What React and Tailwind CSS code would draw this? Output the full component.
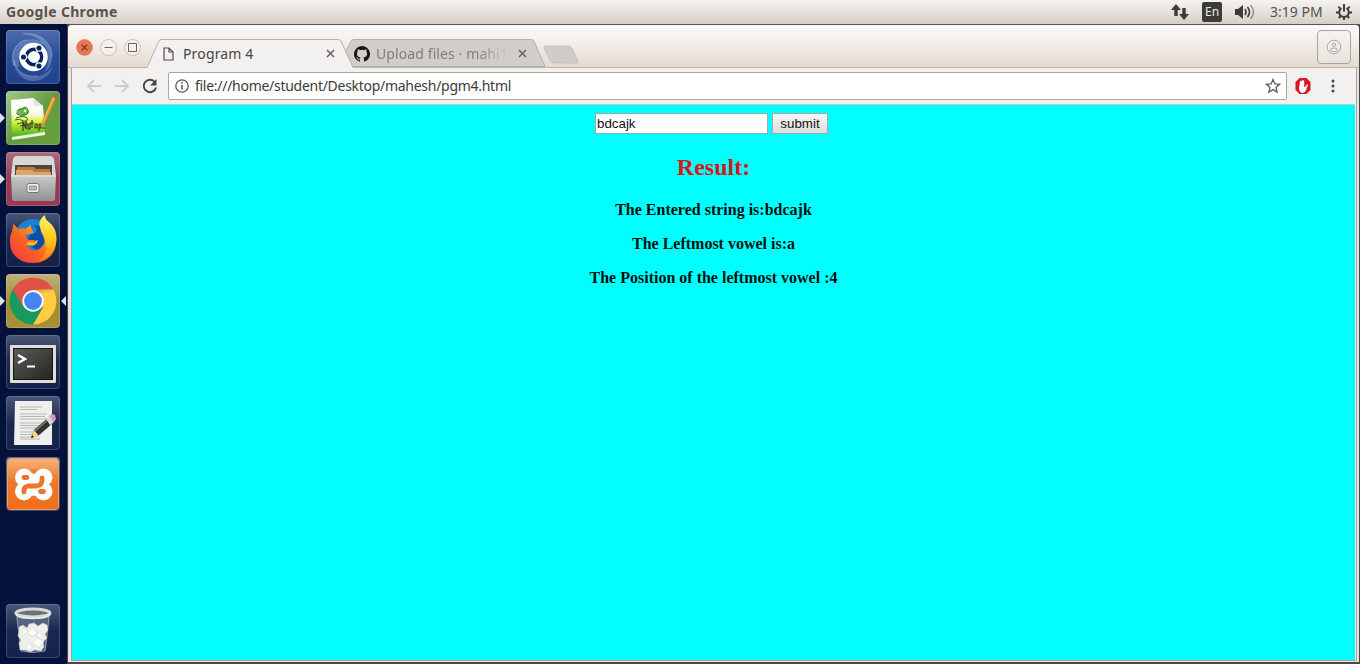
import React from "react";

const ui = "font-['Noto_Sans','Open_Sans',sans-serif]";

function Tile({ bg, label, left, right, children }) {
  return (
    <div className="relative h-[54px] w-[54px]" title={label}>
      {left && (
        <svg className="absolute -left-[6px] top-[21px] h-3 w-[5px]" viewBox="0 0 5 12">
          <path d="M0 1 5 6 0 11Z" fill="#dfe0ea" />
        </svg>
      )}
      {right && (
        <svg className="absolute -right-[6px] top-[22px] h-[10px] w-[5px]" viewBox="0 0 5 10">
          <path d="M5 0 0 5 5 10Z" fill="#dfe0ea" />
        </svg>
      )}
      <div className={"h-[54px] w-[54px] overflow-hidden rounded-[4px] shadow-[inset_0_0_0_1px_rgba(255,255,255,0.16)] " + bg}>
        <svg className="h-[54px] w-[54px]" viewBox="0 0 54 54">{children}</svg>
      </div>
    </div>
  );
}

const glass = "bg-linear-to-b from-[#4a5676] via-[#1a2850] to-[#15234c]";

function Launcher() {
  return (
    <div className="flex w-[67px] shrink-0 flex-col gap-[7px] bg-[#03113b] pl-[6px] pt-[6px]">
      <Tile bg="bg-linear-to-b from-[#4f6dae] via-[#294d99] to-[#23418c]" label="Search">
        <g fill="#9db3dd">
          <path d="M17 4C33 2 46 12 46 27c0 8-4 13-8 16 5-8 6-17 2-25C36 9 27 5 17 4Z" opacity=".4" />
          <path d="M8 36C4 24 9 13 20 10c8-2 16 0 21 6-9-4-18-3-24 3-5 5-5 12-3 18Z" opacity=".35" />
          <path d="M8 30c2 12 12 18 24 16 8-1 13-6 15-12-1 9-8 16-18 17C18 52 8 43 8 30Z" opacity=".35" />
        </g>
        <path d="M17 4C33 2 46 12 46 27M8 36C4 24 9 13 20 10M8 30c2 12 12 18 24 16" fill="none" stroke="#b9c9e8" strokeWidth=".8" opacity=".6" />
        <circle cx="27.500" cy="27" r="14.300" fill="#fff" />
        <circle cx="28" cy="27" r="7.600" fill="none" stroke="#0b2360" strokeWidth="3.600" />
        <path d="M28 27 33.500 17.500M28 27l5.500 9.500M28 27H17" stroke="#fff" strokeWidth="1.200" />
        <circle cx="28" cy="27" r="5.800" fill="#fff" />
        <g fill="#0b2360" stroke="#fff" strokeWidth="1.100">
          <circle cx="17.500" cy="27" r="3.100" /><circle cx="33" cy="18" r="3.100" /><circle cx="33" cy="36" r="3.100" />
        </g>
      </Tile>
      <Tile bg="bg-linear-to-br from-[#a5c98c] via-[#659b42] to-[#66a03d]" label="Notepadqq" left>
        <defs><linearGradient id="note" x2="0" y2="1"><stop stopColor="#fff" /><stop offset=".4" stopColor="#f7fbed" /><stop offset=".6" stopColor="#d9ef36" /><stop offset="1" stopColor="#39a91e" /></linearGradient></defs>
        <path d="m5 9 22-2 10 8 2 27-33 5Z" fill="url(#note)" />
        <path d="m27 7 1 8 9 0Z" fill="#dce6d9" />
        <path d="m6 46 33-5v3L6 49Z" fill="#eef5e7" />
        <path d="M12 22q0-5 4-4 3-4 5 1 3 2 0 4-4 3-9-1Z" fill="#64c339" />
        <g fill="none" stroke="#264b1e" strokeWidth=".9">
          <path d="M11 23q0-6 5-5 4-4 6 1 1 4-3 5-5 1-8-1Zm-1 4q8-3 11 0 2 4-5 3M9 29q5-2 8 1M11 33q6-3 11 0M14 35l7-1" />
        </g>
        <g fill="none" stroke="#2b3b1e" strokeWidth="1.200">
          <path d="M17 40v-9l3 7v-8M22 33v5h2v-5h-2m4-4v8m-2-5h4M29 33v4h2v-4h-2m4 0v7m0-7h2v4h-2m3-3h2m-2 3h3" />
        </g>
        <circle cx="19" cy="20" r="1.200" fill="#e9ffd2" />
        <path d="m36 30 11-25 3 2-11 25-4 4Z" fill="#e79925" /><path d="m46 6 2-3 3 2-1 3Z" fill="#b1664e" />
        <path d="m37 31 11-25" stroke="#f9cd66" strokeWidth="1" />
      </Tile>
      <Tile bg="bg-linear-to-b from-[#aa6e80] via-[#933b55] to-[#983a55]" label="Files" left>
        <defs><linearGradient id="cab" x2="0" y2="1"><stop stopColor="#cbcbc8" /><stop offset="1" stopColor="#929292" /></linearGradient></defs>
        <path d="M7 7q1-3 4-3h33q3 0 4 3l2 17H5Z" fill="#d7d7d4" />
        <path d="M9 13h37v11H9Z" fill="#50433b" />
        <path d="M11 15h17l2 2h14v8H11Z" fill="#b87947" /><path d="M10 18h16l2 2h17v5H10Z" fill="#dba76e" />
        <path d="M5 23h45l-1 24q0 2-3 2H8q-2 0-2-2Z" fill="url(#cab)" /><path d="M5 24h45" stroke="#ededeb" />
        <rect x="21" y="31.500" width="12" height="9" rx="2" fill="#f2f2f0" stroke="#777" /><rect x="23.500" y="34" width="7" height="4" fill="#bcbcba" stroke="#777" strokeWidth=".7" />
      </Tile>
      <Tile bg={glass} label="Firefox">
        <defs>
          <linearGradient id="foxa" x1="0" y1="1" x2="1" y2="0"><stop stopColor="#f8314f" /><stop offset=".45" stopColor="#f8641f" /><stop offset="1" stopColor="#ffdb22" /></linearGradient>
          <linearGradient id="foxb" x2="0" y2="1"><stop stopColor="#fff36b" /><stop offset=".5" stopColor="#ffc91a" /><stop offset="1" stopColor="#fa7a13" /></linearGradient>
        </defs>
        <circle cx="27" cy="24" r="18" fill="#1b82d6" /><path d="M24 12c5 0 8 3 6 7l-6 3-4 8 12 8 10-13-5-12Z" fill="#0b4da9" />
        <path d="M7 11c2 1 4 3 5 5 3-1 5-1 7 0l6-4c0 4 1 5 3 8l-8 2c0 3 1 4 3 5l6 0c-2 4-6 4-8 6 4 6 12 5 16 0 3-6 3-12 1-18 11 0 13 7 12 15-1 12-10 20-23 20C13 50 3 41 4 27c0-6 3-8 3-16Z" fill="url(#foxa)" />
        <path d="M34 14c-2-5 1-9 5-12-1 6 7 7 10 15 5 14-3 28-17 32 7-6 10-12 7-20-1-7-4-8-5-15Z" fill="url(#foxb)" />
        <path d="M21 32c-1-3 2-4 5-3 2 1 4-2 6-2-1 5-5 7-11 5Z" fill="#ffb030" />
      </Tile>
      <Tile bg="bg-linear-to-b from-[#bfb17c] via-[#a58d35] to-[#a98f38]" label="Google Chrome" left right>
        <path d="M6.700 15.500A23.400 23.400 0 0 1 47.300 15.500L27 16 16.500 33Z" fill="#df5245" />
        <path d="M47.300 15.500A23.400 23.400 0 0 1 27 50.500L37 33.500 27 16Z" fill="#ffcc42" />
        <path d="M6.700 15.500A23.400 23.400 0 0 0 27 50.500L37 33 17.500 33Z" fill="#169b5c" />
        <path d="M27 16h20.300l-19 5Z" fill="#000" opacity=".09" />
        <circle cx="27" cy="27" r="10.700" fill="#fff" /><circle cx="27" cy="27" r="8.900" fill="#4384f2" />
      </Tile>
      <Tile bg={glass} label="Terminal">
        <defs><linearGradient id="term" x2="1" y2="1"><stop stopColor="#5c5c58" /><stop offset="1" stopColor="#242421" /></linearGradient></defs>
        <rect x="4" y="10" width="46" height="38" rx="1" fill="#deded9" /><rect x="7.500" y="13.500" width="39" height="31" fill="url(#term)" stroke="#161616" />
        <path d="m12 20 7 4-7 4" fill="none" stroke="#fff" strokeWidth="2.400" /><path d="M21 31.500h8" stroke="#fff" strokeWidth="2" />
      </Tile>
      <Tile bg={glass} label="Text Editor">
        <path d="M9 5h37v44H8Z" fill="#efefed" />
        <path d="M14 11h22M14 13.500h17M14 18h27M14 20.500h25M14 23h27M14 27h26M14 29.500h20M14 32h18M14 36h15M14 38.500h15M14 41h13M14 43h20" stroke="#aaa" strokeWidth=".8" />
        <path d="m25 42 3-8 15-13 4 6-15 13Z" fill="#303330" /><path d="m29 35 15-13" stroke="#7c817d" strokeWidth="1.500" />
        <path d="m25 42 3-8 5 6Z" fill="#f0db78" /><path d="m25 42 1-3 2 2Z" fill="#222" />
        <path d="m40 23 3-3 5 6-4 3Z" fill="#d9d9d9" /><path d="m43 20 3-2 3 1 1 4-2 3Z" fill="#d993cb" />
      </Tile>
      <Tile bg={glass} label="XAMPP">
        <defs><linearGradient id="xampp" x2="0" y2="1"><stop stopColor="#f6b27b" /><stop offset=".45" stopColor="#ed792b" /><stop offset="1" stopColor="#f26c17" /></linearGradient></defs>
        <rect x="1.500" y="1.500" width="51" height="51" rx="3" fill="url(#xampp)" stroke="#dfa27b" />
        <g fill="#fff">
          <circle cx="18" cy="20.500" r="9" /><circle cx="37.500" cy="20.500" r="9" /><circle cx="18" cy="34.500" r="9" /><circle cx="37.500" cy="34.500" r="9" />
          <path d="M18 16h19v23H18Z" />
        </g>
        <path d="M24 12.500h7.500l-3.750 5ZM24 43h7.500l-3.750-5Z" fill="#ef7a2d" />
        <g fill="none" stroke="#ed752a" strokeWidth="4.800" strokeLinecap="round" strokeLinejoin="round">
          <path d="M18 20.500h3M18 35v-2q0-3 4-4h9q5-1 5-6v-2M34.500 34.500h3" />
        </g>
      </Tile>
      <div className="mt-[86px]">
        <Tile bg={glass} label="Trash">
          <path d="m10 10 4 36q13 5 26 0l4-36Z" fill="#8b98a8" opacity=".45" />
          <path d="m11 13 4 34q12 3 24 0l4-34" fill="none" stroke="#b4bec7" opacity=".65" />
          <g fill="#eeeeeb" stroke="#c3c7c8" strokeWidth=".5">
            <path d="m13 23 4-2 4 3 2-4 5-1 4 3 5-3 4 2 1 5-3 4 2 4-4 4 1 5-3 4-6-1-5 2-5-2-5 0-1-7 2-3-3-4 1-4Z" />
            <path d="m17 24 5 3-5 5m10-8 5 5-6 4-4-4m0 10 5 4-5 4m10-13 6 4-5 6-6-4m6-13-3 5 5 3" fill="#fafaf8" />
          </g>
          <ellipse cx="27" cy="9" rx="17" ry="4" fill="#6d7278" stroke="#d9dbda" strokeWidth="3" />
          <path d="M10 10c1 6 33 6 34 0" fill="none" stroke="#f0f0ed" strokeWidth="1.500" />
        </Tile>
      </div>
    </div>
  );
}

function TopBar() {
  return (
    <div className={"flex h-[25px] items-center border-b border-[#5a5450] bg-linear-to-b from-[#f5f3f0] to-[#d7cfc7] pl-[6px] text-[#57534d] " + ui}>
      <span className="w-[118px] whitespace-nowrap text-[14px] font-bold leading-[22px] tracking-[0.32px]">Google Chrome</span>
      <div className="ml-auto flex h-6 items-center pr-2">
        <svg className="h-4 w-[18px]" viewBox="0 0 18 16" fill="#3c3b37"><path d="M5 0 10 6H6.700V12H3.300V6H0ZM13 16 8 10h3.300V4h3.400v6H18Z" /></svg>
        <div className="ml-[13px] h-5 w-5 rounded-[2px] bg-[#3c3b37] text-center text-[12px] leading-[20px] text-[#eeeae5]">En</div>
        <svg className="ml-[13px] h-4 w-5" viewBox="0 0 20 16" fill="none" stroke="#3c3b37" strokeWidth="1.600"><path d="M0 5h3l5-4v14l-5-4H0Z" fill="#3c3b37" stroke="none" /><path d="M10 5q2 3 0 6" /><path d="M12.500 3q4 5 0 10" /><path d="M15.500 1q6 7 0 14" stroke="#99958f" /></svg>
        <span className="ml-[15px] w-[53px] whitespace-nowrap text-[14px] leading-[22px]">3:19 PM</span>
        <svg className="ml-[13px] h-4 w-4" viewBox="0 0 16 16" fill="none" stroke="#3c3b37" strokeWidth="2"><path d="M5.500 4.200a4.800 4.800 0 1 0 5 0" /><path d="M8 0v7.500" /><path d="m2.300 2.800 1.700 1.500M13.700 2.800 12 4.300M0 8.500h3M16 8.500h-3M2.800 14l1.700-1.700M13.200 14l-1.700-1.700M8 13v3" /></svg>
      </div>
    </div>
  );
}

function Close() {
  return <svg className="h-[9px] w-[9px]" viewBox="0 0 9 9"><path d="m1 1 7 7M8 1 1 8" stroke="#65625f" strokeWidth="1.500" /></svg>;
}

function TabStrip() {
  return (
    <div className={"flex h-[43px] shrink-0 rounded-tl-[4px] rounded-tr-[4px] border-b border-[#bdb6af] bg-linear-to-b from-[#fbfaf9] via-[#f0ece8] to-[#e3d9d0] text-[14px] " + ui}>
      <div className="flex gap-[7px] pl-[8px] pt-[14px]">
        <svg className="h-[17px] w-[17px]" viewBox="0 0 17 17"><circle cx="8.500" cy="8.500" r="7.800" fill="#ed7450" stroke="#cf7b62" /><path d="m5.700 5.700 5.600 5.600m0-5.600-5.600 5.600" stroke="#65341f" strokeWidth="1.200" /></svg>
        <svg className="h-[17px] w-[17px]" viewBox="0 0 17 17" fill="#f3f0ed"><circle cx="8.500" cy="8.500" r="8" stroke="#c6c0ba" /><path d="M4.500 8.500h8" stroke="#68645f" /></svg>
        <svg className="h-[17px] w-[17px]" viewBox="0 0 17 17" fill="#f3f0ed"><circle cx="8.500" cy="8.500" r="8" stroke="#c6c0ba" /><path d="M4.500 4.500h8v8h-8Z" stroke="#68645f" /></svg>
      </div>
      <div className="relative z-20 ml-[6px] mt-[14px] h-[29px] w-[206px]">
        <svg className="absolute inset-0 h-[29px] w-[206px]" viewBox="0 0 206 29"><path d="M0 28.500 12 2Q13 .500 14 .500H191Q193 .500 194 2L206 28.500V29H0Z" fill="#f2f1f0" /><path d="M0 28.500 12 2Q13 .500 14 .500H191Q193 .500 194 2L206 28.500" fill="none" stroke="#b6b1ab" /></svg>
        <div className="relative flex h-[29px] items-center pl-[16px]">
          <svg className="h-[14px] w-[11px]" viewBox="0 0 11 14"><path d="M1 1h5l4 4v8H1ZM6 1v4h4" fill="none" stroke="#514e4b" strokeWidth="1.200" /></svg>
          <span className="ml-[9px] w-[143px] whitespace-nowrap tracking-[0.15px] text-[#484542]">Program 4</span>
          <Close />
        </div>
      </div>
      <div className="relative z-10 -ml-[12px] mt-[14px] h-[28px] w-[205px]">
        <svg className="absolute inset-0 h-[28px] w-[205px]" viewBox="0 0 205 28"><path d="M4 14 10 2Q11 .500 13 .500H190Q192 .500 193 2L204 27.500H10Z" fill="#d0cdca" stroke="#b6b0aa" /></svg>
        <div className="relative flex h-[29px] items-center pl-[13px]">
          <svg className="h-4 w-4" viewBox="0 0 16 16"><path d="M8 0a8 8 0 0 0-2.530 15.590c.4.070.550-.170.550-.380v-1.490c-2.230.480-2.700-.940-2.700-.940-.360-.920-.890-1.170-.890-1.170-.720-.500.060-.490.060-.490.800.060 1.230.830 1.230.830.710 1.220 1.870.870 2.330.660.070-.520.280-.870.510-1.070-1.780-.200-3.640-.890-3.640-3.950 0-.870.310-1.590.820-2.150-.080-.200-.360-1.020.080-2.120 0 0 .670-.220 2.200.820a7.600 7.600 0 0 1 4 0c1.530-1.040 2.200-.820 2.200-.820.440 1.100.160 1.920.080 2.120.510.560.820 1.270.820 2.150 0 3.070-1.870 3.750-3.650 3.950.290.250.540.730.540 1.480v2.190c0 .210.150.460.550.380A8 8 0 0 0 8 0Z" fill="#171515" /></svg>
          <span className="ml-[6px] w-[133px] overflow-hidden whitespace-nowrap bg-linear-to-r from-[#7c7977] from-75% to-[#d0cdca] to-100% bg-clip-text tracking-[0.1px] text-transparent">Upload files · mahi1</span>
          <span className="ml-[9px] flex"><Close /></span>
        </div>
      </div>
      <svg className="-ml-[3px] mt-[20px] h-5 w-9" viewBox="0 0 36 20"><path d="M2 1H25Q28 1 29 3L35 17Q35 18 34 18H12Q9 18 7 15L1 3Q1 1 2 1Z" fill="#d0ccc9" stroke="#c5beb8" /></svg>
      <div className="ml-auto mr-[8px] mt-[5px] flex h-[34px] w-[34px] items-center justify-center rounded-[4px] border border-[#aaa49e] bg-linear-to-b from-[#f5f3f1] to-[#e9e3dd]">
        <svg className="h-4 w-4" viewBox="0 0 16 16" fill="none" stroke="#a5a09b" strokeWidth=".9"><circle cx="8" cy="8" r="6.800" /><circle cx="8" cy="5.800" r="1.700" /><ellipse cx="8" cy="10.800" rx="3.500" ry="1.800" /></svg>
      </div>
    </div>
  );
}

function Toolbar() {
  return (
    <div className={"flex h-[37px] shrink-0 items-center border-b border-[#b8cfcd] bg-[#f2f1f0] pl-[14px] " + ui}>
      <svg className="h-4 w-4" viewBox="0 0 16 16" fill="none" stroke="#cccac8" strokeWidth="1.800"><path d="M15 8H2m6-6L2 8l6 6" /></svg>
      <svg className="ml-[12px] h-4 w-4" viewBox="0 0 16 16" fill="none" stroke="#cccac8" strokeWidth="1.800"><path d="M1 8h13M8 2l6 6-6 6" /></svg>
      <svg className="ml-[12px] h-4 w-4" viewBox="0 0 16 16"><path d="M13 4.300A6.200 6.200 0 1 0 14 9.500" fill="none" stroke="#484644" strokeWidth="2" /><path d="M14.500 1v6.500H8Z" fill="#484644" /></svg>
      <div className="ml-[10px] flex h-[28px] w-[1119px] items-center rounded-[2px] border border-[#aaa6a2] bg-white pl-[6px] pr-[5px]">
        <svg className="h-[14px] w-[14px]" viewBox="0 0 14 14" fill="none" stroke="#5a5a5a" strokeWidth="1.300"><circle cx="7" cy="7" r="6.200" /><path d="M7 6v4.500M7 3v1.600" strokeWidth="1.600" /></svg>
        <span className="ml-[6px] whitespace-nowrap text-[14px] leading-5 tracking-[-0.28px] text-[#3b3b3b]">file:///home/student/Desktop/mahesh/pgm4.html</span>
        <svg className="ml-auto h-4 w-4" viewBox="0 0 16 16"><path d="m8 1.500 1.900 4.400 4.700.4-3.600 3.100 1.100 4.700L8 11.600l-4.100 2.500L5 9.400 1.400 6.300l4.700-.4Z" fill="none" stroke="#5e5e5e" strokeWidth="1.300" /></svg>
      </div>
      <svg className="ml-[8px] h-4 w-4" viewBox="0 0 16 16"><path d="M4.500 0h7L15.500 4v8l-4 4h-7L.5 12V4Z" fill="#db1820" /><path d="M5 4q0-2 2-1 1-2 2 0 1-1 1 1v4l2-2q1 0 1 1l-2 5q-1 3-4 3-3-1-3-5Z" fill="#fff" /><path d="M9.500 3v6l3-3" fill="none" stroke="#db1820" strokeWidth=".8" /></svg>
      <svg className="ml-[14px] h-4 w-4" viewBox="0 0 16 16" fill="#484644"><circle cx="8" cy="3" r="1.500" /><circle cx="8" cy="8" r="1.500" /><circle cx="8" cy="13" r="1.500" /></svg>
    </div>
  );
}

export default function App() {
  return (
    <div className="flex h-[664px] w-[1360px] flex-col overflow-hidden bg-[#03113b]">
      <TopBar />
      <div className="flex min-h-0 flex-1">
        <div className="-mt-px flex"><Launcher /></div>
        <div className="flex min-w-0 flex-1 bg-[#4b4643] pb-[2px] pl-px pr-px">
          <div className="flex min-w-0 flex-1 flex-col rounded-t-[4px] bg-[#e9e4e1]">
            <TabStrip />
            <div className="mb-px ml-[3px] mr-[2px] flex min-h-0 flex-1 flex-col border-x border-b border-[#aaa19c] bg-[#f2f1f0] pr-px">
              <Toolbar />
              <main className="flex min-h-0 flex-1 flex-col items-center bg-[#00ffff] pt-[8px] font-['Liberation_Serif',serif] font-bold text-[#031010]">
                <form className="mr-[4px] flex gap-1 font-['Liberation_Sans',sans-serif] text-[13.333px] font-normal" onSubmit={(e) => e.preventDefault()}>
                  <input aria-label="String" className="h-[21px] w-[173px] border border-[#93acac] bg-white px-px text-[#111] outline-none" defaultValue="bdcajk" />
                  <button className="h-[21px] w-[56px] border border-[#a6aaaa] bg-linear-to-b from-[#f7f7f7] to-[#dddddd] leading-[19px] text-[#111]">submit</button>
                </form>
                <h2 className="mt-[20px] text-[24px] leading-[27px] text-[#d51a1c]">Result:</h2>
                <p className="mt-[20px] text-[16px] leading-[18px]">The Entered string is:bdcajk</p>
                <p className="mt-[16px] text-[16px] leading-[18px]">The Leftmost vowel is:a</p>
                <p className="mt-[16px] text-[16px] leading-[18px]">The Position of the leftmost vowel :4</p>
              </main>
            </div>
          </div>
        </div>
      </div>
    </div>
  );
}
